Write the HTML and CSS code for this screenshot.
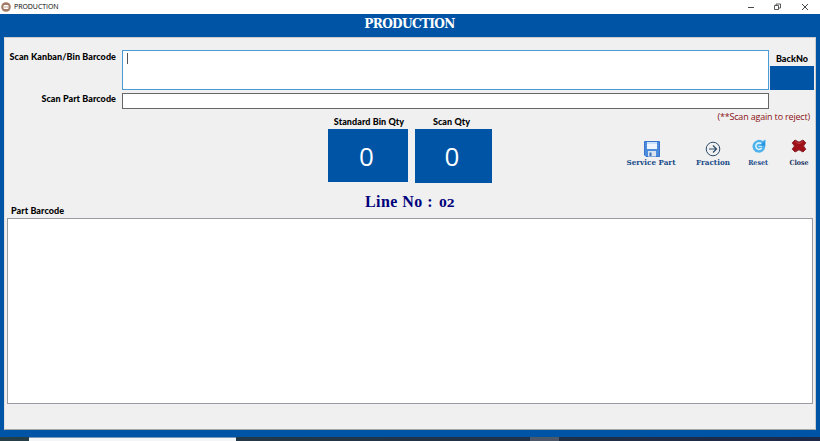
FILE: index.html
```html
<!DOCTYPE html>
<html lang="en">
<head>
<meta charset="utf-8">
<title>PRODUCTION</title>
<link rel="stylesheet" href="styles.css">
</head>
<body>
<div class="window">
  <header class="titlebar">
    <svg class="app-icon" viewBox="0 0 10 10"><circle cx="5" cy="5" r="4.800" fill="#a27c67"/><rect x="2.500" y="3" width="5" height="4" rx="1" fill="#fff"/><path d="M3 5h4" stroke="#b59583" stroke-width=".8"/></svg>
    <span class="window-name">PRODUCTION</span>
    <svg class="controls" viewBox="0 0 66 12" fill="none" stroke="#333"><path d="M0 6.500h6" stroke-width=".9"/><path d="M26.500 4.500h4v4h-4zM28 4.500v-1.500h4.500v4h-2" stroke-width=".8"/><path d="M54 3l6 6m0-6l-6 6" stroke-width=".9"/></svg>
  </header>
  <h1 class="banner">PRODUCTION</h1>
  <main class="panel">
    <section class="form">
      <label class="label kanban-label">Scan Kanban/Bin Barcode</label>
      <div class="field kanban"><span class="caret"></span></div>
      <div class="back"><span class="label">BackNo</span><div class="back-value"></div></div>
      <label class="label part-label">Scan Part Barcode</label>
      <div class="field part"></div>
    </section>
    <section class="middle">
      <div class="counter standard"><span class="label">Standard Bin Qty</span><div class="count">0</div></div>
      <div class="counter scanned"><span class="label">Scan Qty</span><div class="count">0</div></div>
      <div class="side">
        <p class="note">(**Scan again to reject)</p>
        <nav class="actions">
          <div class="action service">
            <svg width="16" height="16" viewBox="0 0 16 16"><path d="M.5.5h15v15H2l-1.500-1.500z" fill="#4b8cdd" stroke="#3972cc"/><path d="M3 1h10v7H3z" fill="#eef5ff"/><path d="M3 2h10" stroke="#a7cdf5"/><path d="M4 10h8v5.500H4z" fill="#dbe3ef"/><path d="M5.500 11.500h2v3.500h-2z" fill="#3970b8"/></svg>
            <span>Service Part</span>
          </div>
          <div class="action fraction">
            <svg width="16" height="16" viewBox="0 0 16 16" fill="none" stroke="#294b69"><circle cx="8" cy="8" r="6.800"/><path d="M4 8h7.500M8 4.500L11.500 8 8 11.500" stroke-width="1.200"/></svg>
            <span>Fraction</span>
          </div>
          <div class="action reset">
            <svg width="14" height="14" viewBox="0 0 14 14"><path d="M10.500 2L13.500.5v6.500H13.300A6.400 6.400 0 1 1 10.500 2z" fill="#50b2ec"/><path d="M9.300 4.900A3.200 3.200 0 1 0 9.700 9" fill="none" stroke="#e2f6ff" stroke-width="1.500"/><path d="M7 6.700h6V2z" fill="#2896df"/><path d="M6.500 7.300h3.500" stroke="#e2f6ff"/></svg>
            <span>Reset</span>
          </div>
          <div class="action close">
            <svg width="16" height="14" viewBox="0 0 16 14"><path d="M4 1L8 3.200 12 1l2.800 2.800L12.500 7l2.300 3.200L12 13l-4-2.200L4 13l-2.800-2.800L3.500 7 1.200 3.800z" fill="#a01018" stroke="#8a222a" stroke-linejoin="round"/><path d="M4.200 2.600L8 4.800l3.800-2.200" fill="none" stroke="#c0383e"/></svg>
            <span>Close</span>
          </div>
        </nav>
      </div>
    </section>
    <section class="line-row">
      <span class="label list-title">Part Barcode</span>
      <h2 class="line">Line No : <span class="digits">02</span></h2>
    </section>
    <div class="list"></div>
  </main>
  <footer class="taskbar"><div class="task-light"></div><div class="task-gray"></div></footer>
</div>
</body>
</html>
```
FILE: styles.css
```css
* { box-sizing: border-box; }
body { margin: 0; background: #0054a6; }
svg { display: block; flex: none; }
.window { width: 820px; height: 441px; display: flex; flex-direction: column; overflow: hidden; background: #0054a6; font-family: "Open Sans", sans-serif; color: #000; }
.titlebar { height: 14px; flex: none; background: #fff; display: flex; align-items: center; padding: 0 10px 1px 1px; }
.app-icon { width: 10px; height: 10px; }
.window-name { margin-left: 3px; font-size: 7px; line-height: 12px; letter-spacing: -.05px; white-space: nowrap; }
.controls { width: 66px; height: 12px; margin-left: auto; margin-right: -4px; }
.banner { margin: 0; height: 23px; flex: none; text-align: center; color: #fff; font: bold 13.5px/18px "DejaVu Serif Condensed", "DejaVu Serif", serif; letter-spacing: -.65px; padding-right: 1px; }
.panel { margin: 0 4px; height: 393px; flex: none; background: #f0f0f0; border: 1px solid #ccc; border-left-color: #e4e0dd; border-bottom-color: #a7a7a7; padding: 12px 2px 0; }
.label { font: 900 9px/12px Lato, sans-serif; letter-spacing: .07px; white-space: nowrap; }
.form { display: grid; grid-template-columns: 115px 647px 44px; grid-template-rows: 40px 16px; row-gap: 3px; column-gap: 1px; margin-left: -1px; }
.kanban-label, .part-label { text-align: right; padding-right: 5px; }
.kanban-label { padding-top: 1px; }
.field { background: #fff; border: 1px solid #666; }
.kanban { border-color: #4c9bd9; padding: 2px 4px; }
.caret { display: block; width: 1px; height: 11px; background: #555; }
.back { display: flex; flex-direction: column; align-items: center; padding-top: 3px; }
.back-value { width: 44px; height: 24px; margin-top: 1px; background: #0054a6; flex: none; }
.middle { display: flex; height: 74px; padding: 0 0 0 321px; }
.counter { display: flex; flex-direction: column; align-items: center; padding-top: 7px; }
.standard { width: 80px; }
.standard .label { margin-left: 2px; }
.scanned { width: 77px; margin-left: 7px; }
.scanned .label { margin-left: -4px; }
.count { width: 100%; height: 53px; flex: none; margin-top: 1px; background: #0054a6; color: #fff; text-align: center; font: 26px/54px "Open Sans", sans-serif; padding-right: 3px; }
.scanned .count { height: 54px; line-height: 55px; }
.side { margin-left: auto; width: 204px; }
.note { margin: 1px 3px 0 0; height: 14px; text-align: right; font-size: 9px; letter-spacing: -.18px; line-height: 14px; color: #8b1015; white-space: nowrap; }
.actions { display: flex; align-items: flex-start; padding-top: 14px; }
.action { display: flex; flex-direction: column; align-items: center; font: bold 8px/11px "DejaVu Serif Condensed", "DejaVu Serif", serif; color: #174a88; white-space: nowrap; }
.service { width: 54px; padding-top: 3px; margin-left: 15px; }
.service svg { margin-left: 1px; }
.fraction { width: 40px; padding-top: 3px; margin-left: 15px; }
.reset { width: 24px; margin-left: 13px; padding-top: 1px; }
.reset svg { margin-left: 2px; }
.close { width: 24px; margin-left: 17px; padding-top: 1px; }
.reset span, .close span { font-size: 7px; margin-top: 4px; }
.close span { color: #22335f; }
.line-row { height: 35px; display: grid; grid-template-columns: 358px 1fr; }
.list-title { padding: 22px 0 0 4px; }
.line { margin: 0; padding-top: 9px; color: #00007c; font: bold 16px/20px "Liberation Serif", serif; letter-spacing: .45px; white-space: nowrap; }
.digits { display: inline-block; font-size: 12px; line-height: 12px; letter-spacing: 0; transform: scaleX(1.3); transform-origin: left; margin-left: 1px; }
.list { height: 186px; background: #fff; border: 1px solid #9b9ba3; }
.taskbar { height: 4px; margin-top: 7px; flex: none; background: linear-gradient(90deg, #263e46, #1d2848); display: flex; }
.task-light { width: 207px; margin-left: 29px; background: #f4f5f6; border-top: 1px solid #7898b8; }
.task-gray { width: 29px; margin-left: 294px; background: #4c5868; }
```
